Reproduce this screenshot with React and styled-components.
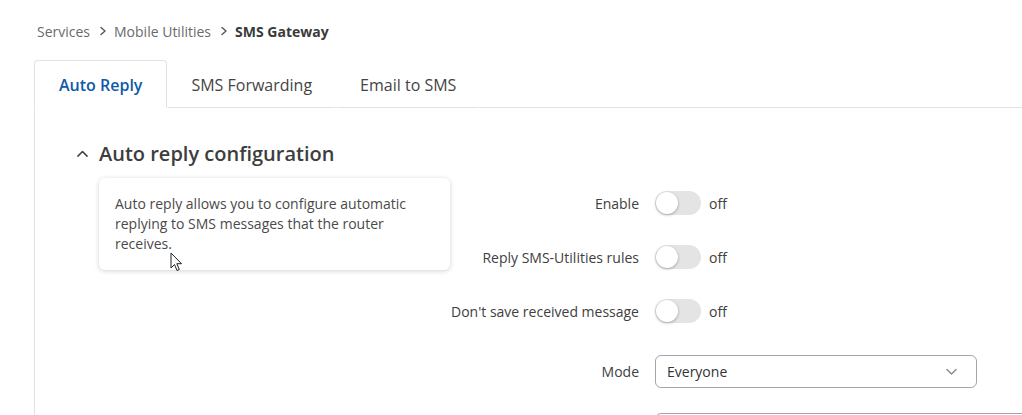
import React from 'react';
import styled, { createGlobalStyle } from 'styled-components';

const GlobalStyle = createGlobalStyle`
  html, body {
    margin: 0;
    padding: 0;
    background: #ffffff;
    font-family: "Open Sans", "Noto Sans", sans-serif;
    color: #404040;
    overflow: hidden;
  }
`;

const Page = styled.div`
  width: 1022px;
  height: 415px;
  padding-left: 34px;
  box-sizing: border-box;
  overflow: hidden;
`;

const Breadcrumb = styled.nav`
  display: flex;
  align-items: center;
  height: 20px;
  padding: 21px 0 0 3px;
  font-size: 14px;
  color: #6a6a6a;
`;

const Crumb = styled.span`
  font-weight: ${({ $current }) => ($current ? 700 : 400)};
  color: ${({ $current }) => ($current ? '#3a3a3a' : '#6a6a6a')};
`;

const Sep = styled.span`
  display: inline-flex;
  margin: 0 6px 0 8px;
  color: #555;
`;

const TabRow = styled.div`
  display: flex;
  margin-top: 19px;
  height: 48px;
`;

const Tab = styled.div`
  display: flex;
  align-items: center;
  padding: 2px ${({ $active }) => ($active ? 24 : 23)}px 0;
  font-size: 16px;
  box-sizing: border-box;
  color: ${({ $active }) => ($active ? '#0e5aa7' : '#444')};
  font-weight: ${({ $active }) => ($active ? 600 : 400)};
  border: 1px solid ${({ $active }) => ($active ? '#e2e2e2' : 'transparent')};
  border-bottom: 1px solid ${({ $active }) => ($active ? 'transparent' : '#e2e2e2')};
  border-radius: ${({ $active }) => ($active ? '4px 4px 0 0' : '0')};
`;

const TabFill = styled.div`
  flex: 1;
  border-bottom: 1px solid #e2e2e2;
`;

const Panel = styled.div`
  border-left: 1px solid #e2e2e2;
  height: 400px;
  position: relative;
`;

const SectionHead = styled.div`
  display: flex;
  align-items: center;
  gap: 10px;
  padding: 31px 0 0 41px;
  height: 28px;
  font-size: 20px;
  font-weight: 600;
  color: #3d3d3d;
`;

const Form = styled.div`
  display: grid;
  grid-template-columns: 604px 1fr;
  column-gap: 16px;
  margin-top: 9px;
`;

const Label = styled.div`
  display: flex;
  align-items: center;
  justify-content: flex-end;
  height: ${({ $h }) => $h}px;
  margin-top: ${({ $mt }) => $mt || 0}px;
  font-size: 14px;
  color: #404040;
`;

const Control = styled.div`
  display: flex;
  align-items: center;
  gap: 8px;
  height: ${({ $h }) => $h}px;
  margin-top: ${({ $mt }) => $mt || 0}px;
  font-size: 14px;
  color: #404040;
`;

const Track = styled.div`
  width: 46px;
  height: 24px;
  border-radius: 12px;
  background: #e4e4e4;
  display: flex;
  align-items: center;
  padding: 1px;
  box-sizing: border-box;
`;

const Knob = styled.div`
  width: 22px;
  height: 22px;
  border-radius: 50%;
  background: #fff;
  box-shadow: 0 1px 3px rgba(0, 0, 0, 0.3);
`;

const Select = styled.div`
  width: ${({ $w }) => $w};
  height: 33px;
  box-sizing: border-box;
  border: 1px solid #a4a4ac;
  border-radius: 6px;
  display: flex;
  align-items: center;
  justify-content: space-between;
  padding: 0 18px 0 11px;
  font-size: 14px;
  color: #333;
  background: #fff;
`;

const Tooltip = styled.div`
  position: absolute;
  left: 64px;
  top: 70px;
  width: 351px;
  height: 92px;
  box-sizing: border-box;
  padding: 16px 16px;
  background: #fff;
  border-radius: 6px;
  box-shadow: 0 1px 5px rgba(0, 0, 0, 0.18);
  font-size: 14px;
  line-height: 20px;
  color: #4a4a4a;
`;

const Cursor = styled.svg`
  position: absolute;
  left: 135px;
  top: 144px;
`;

const Chevron = ({ dir = 'right', size = 10, color = '#555', stroke = 1.4 }) => {
  const d = {
    right: 'M3 1.5 L7 5 L3 8.5',
    up: 'M1.5 7 L5 3.5 L8.5 7',
    down: 'M1.5 3.5 L5 7 L8.5 3.5',
  }[dir];
  return (
    <svg width={size} height={size} viewBox="0 0 10 10" fill="none">
      <path d={d} stroke={color} strokeWidth={stroke} strokeLinecap="round" strokeLinejoin="round" />
    </svg>
  );
};

const Toggle = () => (
  <>
    <Track>
      <Knob />
    </Track>
    <span>off</span>
  </>
);

export default function App() {
  return (
    <Page>
      <GlobalStyle />
      <Breadcrumb>
        <Crumb>Services</Crumb>
        <Sep><Chevron /></Sep>
        <Crumb>Mobile Utilities</Crumb>
        <Sep><Chevron /></Sep>
        <Crumb $current>SMS Gateway</Crumb>
      </Breadcrumb>
      <TabRow>
        <Tab $active>Auto Reply</Tab>
        <Tab>SMS Forwarding</Tab>
        <Tab>Email to SMS</Tab>
        <TabFill />
      </TabRow>
      <Panel>
        <SectionHead>
          <Chevron dir="up" size={13} color="#444" stroke={1.2} />
          Auto reply configuration
        </SectionHead>
        <Form>
          <Label $h={54}>Enable</Label>
          <Control $h={54}><Toggle /></Control>
          <Label $h={54}>Reply SMS-Utilities rules</Label>
          <Control $h={54}><Toggle /></Control>
          <Label $h={54}>Don't save received message</Label>
          <Control $h={54}><Toggle /></Control>
          <Label $h={33} $mt={17}>Mode</Label>
          <Control $h={33} $mt={17}>
            <Select $w="322px">
              Everyone
              <Chevron dir="down" size={13} color="#8a8a8a" stroke={1.1} />
            </Select>
          </Control>
          <Label $h={33} $mt={25}></Label>
          <Control $h={33} $mt={25}>
            <Select $w="400px" />
          </Control>
        </Form>
        <Tooltip>
          Auto reply allows you to configure automatic replying to SMS messages that the router receives.
        </Tooltip>
        <Cursor width="13" height="20" viewBox="0 0 13 20">
          <path d="M1 1 L1 16 L4.5 12.5 L7 18.5 L9.3 17.5 L6.8 11.7 L11.5 11.7 Z" fill="#fff" stroke="#222" strokeWidth="1" strokeLinejoin="round" />
        </Cursor>
      </Panel>
    </Page>
  );
}
